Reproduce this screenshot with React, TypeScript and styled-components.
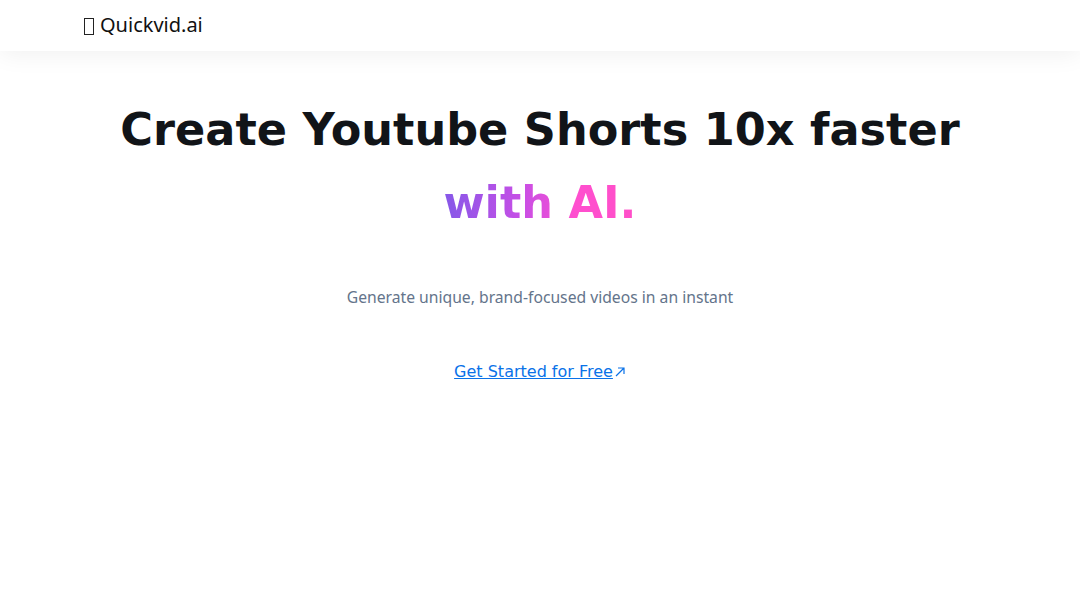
import React from 'react';
import styled, { createGlobalStyle } from 'styled-components';

const GlobalStyle = createGlobalStyle`
  html, body {
    margin: 0;
    padding: 0;
    background: #ffffff;
  }
  body {
    font-family: 'DejaVu Sans', sans-serif;
  }
`;

const Page = styled.div`
  min-height: 608px;
  display: flex;
  flex-direction: column;
`;

const NavBar = styled.header`
  height: 51px;
  background: #ffffff;
  display: flex;
  align-items: center;
  padding: 0 84px;
  box-shadow: 0 4px 24px rgba(0, 0, 0, 0.06);
  position: relative;
  z-index: 1;
`;

const Logo = styled.a`
  display: flex;
  align-items: center;
  gap: 6px;
  font-family: 'Noto Sans', sans-serif;
  font-size: 20px;
  color: #111111;
  text-decoration: none;
  margin-top: -2px;
`;

const MissingGlyph = styled.span`
  width: 10px;
  height: 17px;
  border: 1px solid #222;
  box-sizing: border-box;
  margin-top: 3px;
`;

const Hero = styled.main`
  display: flex;
  flex-direction: column;
  align-items: center;
  padding-top: 43px;
`;

const Title = styled.h1`
  margin: 0;
  font-family: 'DejaVu Sans', sans-serif;
  font-weight: 700;
  font-size: 44.6px;
  line-height: 73px;
  color: #111418;
  text-align: center;
`;

const Gradient = styled.span`
  background: linear-gradient(90deg, #8558e8 0%, #c64fe6 40%, #ff4fcf 68%, #ff4fc8 100%);
  -webkit-background-clip: text;
  background-clip: text;
  color: transparent;
`;

const Subtitle = styled.p`
  margin: 46px 0 0;
  font-family: 'Noto Sans', sans-serif;
  font-size: 15.7px;
  color: #64748b;
`;

const CtaLink = styled.a`
  margin-top: 54px;
  font-family: 'DejaVu Sans', sans-serif;
  font-size: 16px;
  color: #0a72e8;
  text-decoration: underline;
  display: inline-flex;
  align-items: center;
`;

const Arrow = styled.svg`
  width: 12px;
  height: 12px;
  margin-left: 1px;
`;

export default function App() {
  return (
    <Page>
      <GlobalStyle />
      <NavBar>
        <Logo href="#">
          <MissingGlyph />
          Quickvid.ai
        </Logo>
      </NavBar>
      <Hero>
        <Title>
          Create Youtube Shorts 10x faster
          <br />
          <Gradient>with AI.</Gradient>
        </Title>
        <Subtitle>Generate unique, brand-focused videos in an instant</Subtitle>
        <CtaLink href="#">
          Get Started for Free
          <Arrow viewBox="0 0 12 12" fill="none" stroke="currentColor" strokeWidth="1.2">
            <path d="M2 10L10 2M4 2h6v6" />
          </Arrow>
        </CtaLink>
      </Hero>
    </Page>
  );
}
